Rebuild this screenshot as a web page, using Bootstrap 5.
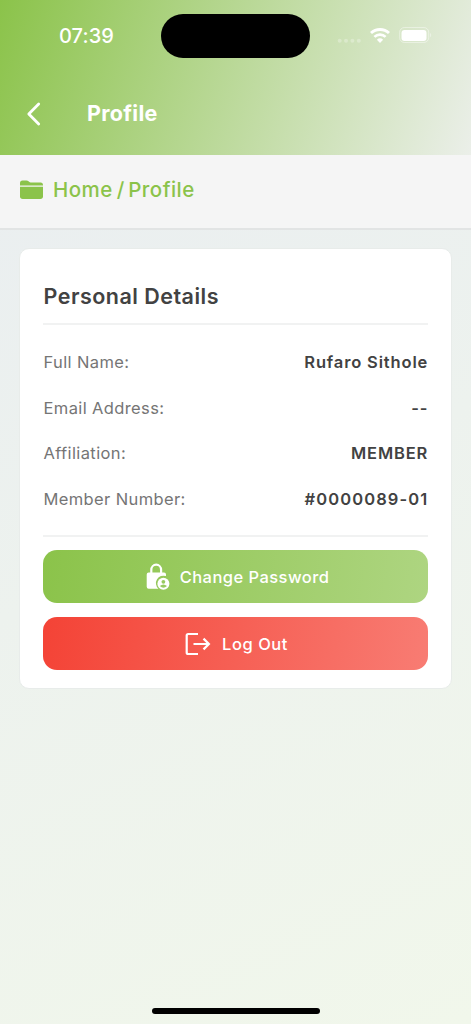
<!DOCTYPE html>
<html lang="en">
<head>
<meta charset="utf-8">
<meta name="viewport" content="width=device-width, initial-scale=1">
<title>Profile</title>
<link href="https://cdn.jsdelivr.net/npm/bootstrap@5.3.0/dist/css/bootstrap.min.css" rel="stylesheet">
<style>
body{font-family:Inter,"Liberation Sans",sans-serif;color:#424242;background:linear-gradient(155.3deg,#e9edf1,#f1f7eb);height:1024px;overflow:hidden}
.top-area{height:155px;background:linear-gradient(108.2deg,#8bc34a,#ebefe9)}
.status-row{height:72px}
.island{left:161px;top:14px;width:149px;height:44px;border-radius:22px;background:#000}
.clock{font-size:20px;font-weight:500;line-height:24px;padding:24px 0 0 59px;letter-spacing:.1px}
.status-icons{padding:25px 39px 0 0}
.title-row{height:83px;padding-left:26px}
.title-row h1{font-size:21.5px;font-weight:700;line-height:28px;letter-spacing:.3px;margin-left:46px;padding-bottom:2px}
.crumb-bar{height:75px;background:#f5f5f5;border-bottom:2px solid #e2e4e4;padding:0 0 4px 20px}
.crumb-text{font-size:20.5px;font-weight:500;line-height:26px;color:#8bc34a;margin-left:9px;letter-spacing:.45px}
.slash{margin:0 3.5px 0 4px}
.panel{margin:18px 19px 0;border:1px solid #e8ecea;border-radius:10px;background:#fff;height:441px;padding:0 23px}
.panel h2{font-size:21.5px;font-weight:600;line-height:28px;padding-top:32.5px;height:74px;letter-spacing:.48px;margin-left:.5px}
.rule{height:2px;background:#f1f2f2}
.details{padding:14px 0 13.7px .5px}
.detail{height:45.7px;font-size:16.5px;line-height:22px}
.detail-label{color:#757575;letter-spacing:.38px}
.detail-value{font-weight:600;letter-spacing:.85px;margin-right:-.2px}
.member-id{letter-spacing:1.08px}
.action{height:53px;border:0;border-radius:14px;color:#fff!important;font-size:16.5px;font-weight:450;padding:0;letter-spacing:.45px}
.action-stack{margin-top:13px;gap:14px}
.action-green{background:linear-gradient(98deg,#8bc34a,#aed581)}
.action-red{background:linear-gradient(98deg,#f44336,#f87c73);letter-spacing:.55px}
.icon-lock{margin:0 7px 0 3px}
.icon-exit{margin-right:11px}
.home-line{width:168px;height:6px;border-radius:3px;background:#000;margin-bottom:10px}
</style>
</head>
<body class="d-flex flex-column">
<header class="top-area text-white position-relative">
  <div class="island position-absolute"></div>
  <div class="status-row d-flex justify-content-between">
    <div class="clock">07:39</div>
    <div class="status-icons">
      <svg class="d-block" width="95" height="20" viewBox="0 0 95 20" fill="#fff">
        <g opacity=".28"><circle cx="2.7" cy="15.7" r="2"/><circle cx="9" cy="15.7" r="2"/><circle cx="15.4" cy="15.7" r="2"/><circle cx="21.8" cy="15.7" r="2"/></g>
        <g fill="none" stroke="#fff"><path d="M34 8a13.2 13.2 0 0 1 18 0" stroke-width="2.9"/><path d="M37.4 11.9a8 8 0 0 1 11.2 0" stroke-width="2.7"/></g>
        <path d="M39.9 14.8a4.5 4.5 0 0 1 6.2 0L43 18Z"/>
        <rect x="62.7" y="2.5" width="29" height="15" rx="4.8" fill="none" stroke="#fff" stroke-opacity=".42"/>
        <rect x="64.5" y="5" width="25" height="11" rx="3"/><path d="M93.2 7.8q2 2.3 0 4.6Z" opacity=".5"/>
      </svg>
    </div>
  </div>
  <div class="title-row d-flex align-items-center">
    <svg width="15" height="24" viewBox="0 0 15 24" fill="none" stroke="#fff" stroke-width="2.8" stroke-linecap="round" stroke-linejoin="round"><path d="M12.7 2 2.8 12l9.9 10"/></svg>
    <h1 class="mb-0">Profile</h1>
  </div>
</header>
<nav class="crumb-bar d-flex align-items-center">
  <svg width="24" height="20" viewBox="0 0 24 20" fill="#8bc34a"><path d="M0 5.5V3Q0 .5 2.5 .5h4q1.2 0 2 .8l.6.5q.7.6 1.5.6h10Q23 2.4 23 5v.5Z"/><path d="M0 6.8h23v9.5q0 2.7-2.7 2.7H2.7Q0 19 0 16.3Z"/></svg>
  <div class="crumb-text d-flex"><span>Home</span><span class="slash">/</span><span>Profile</span></div>
</nav>
<main class="panel">
  <h2 class="mb-0">Personal Details</h2>
  <div class="rule"></div>
  <div class="details">
    <div class="detail d-flex justify-content-between align-items-center"><span class="detail-label">Full Name:</span><span class="detail-value">Rufaro Sithole</span></div>
    <div class="detail d-flex justify-content-between align-items-center"><span class="detail-label">Email Address:</span><span class="detail-value">--</span></div>
    <div class="detail d-flex justify-content-between align-items-center"><span class="detail-label">Affiliation:</span><span class="detail-value">MEMBER</span></div>
    <div class="detail d-flex justify-content-between align-items-center"><span class="detail-label">Member Number:</span><span class="detail-value member-id">#0000089-01</span></div>
  </div>
  <div class="rule"></div>
  <div class="action-stack d-flex flex-column">
    <button class="btn action action-green d-flex align-items-center justify-content-center">
      <svg class="icon-lock" width="28" height="28" viewBox="0 0 28 28"><path d="M6.3 10V7a4.9 5.3 0 0 1 9.8 0v3" fill="none" stroke="#fff" stroke-width="2.2"/><path d="M3.7 9.5H19q2 0 2 2v1.6a7.5 7.5 0 0 0-7.6 12.6H3.7q-2 0-2-2V11.5q0-2 2-2Z" fill="#fff"/><circle cx="18.4" cy="20.8" r="6" fill="#fff"/><circle cx="18.4" cy="18.8" r="1.9" fill="#98ca60"/><path d="M14.8 23q3.6-3 7.2 0-3.6 3.4-7.2 0Z" fill="#98ca60"/></svg>
      <span>Change Password</span>
    </button>
    <button class="btn action action-red d-flex align-items-center justify-content-center">
      <svg class="icon-exit" width="28" height="28" viewBox="0 0 28 28" fill="none" stroke="#fff" stroke-width="2.2"><path d="M15 4H5.2Q3.7 4 3.7 5.5v17q0 1.5 1.500 1.500H15M10.500 14h15M20.500 8.600l5.400 5.400-5.400 5.400"/></svg>
      <span>Log Out</span>
    </button>
  </div>
</main>
<div class="home-line mt-auto mx-auto"></div>
<script src="https://cdn.jsdelivr.net/npm/bootstrap@5.3.0/dist/js/bootstrap.bundle.min.js"></script>
</body>
</html>
